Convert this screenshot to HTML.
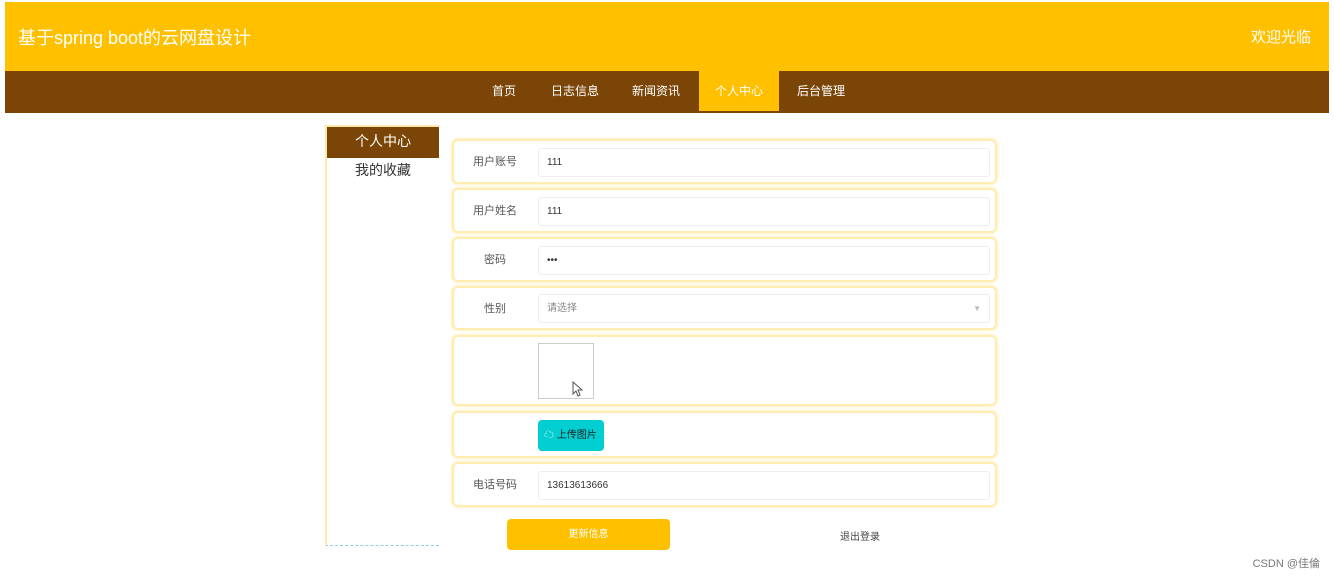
<!DOCTYPE html>
<html><head><meta charset="utf-8"><style>
*{margin:0;padding:0;box-sizing:border-box}
body{width:1334px;height:577px;background:#fff;position:relative;overflow:hidden;font-family:"Liberation Sans","Noto Sans CJK SC",sans-serif}
.hd{position:absolute;left:5px;top:2px;width:1324px;height:69px;background:#FFC000;color:#fff}
.hd .t{position:absolute;left:13px;top:22px;font-size:18px}
.hd .w{position:absolute;right:18px;top:24px;font-size:15px}
.nav{position:absolute;left:5px;top:71px;width:1324px;height:42px;background:#7A4507;color:#fff;font-size:12px}
.nav span{position:absolute;top:0;line-height:40px;text-align:center}
.nav .a{background:#FFC000}
.side{position:absolute;left:325px;top:125px;width:114px;height:421px;border-left:2px solid #FFE9A8;border-top:2px solid #FFE9A8;border-bottom:1px dashed #9cd}
.side .a{height:31px;background:#7A4507;color:#fff;text-align:center;line-height:29px;font-size:14px}
.side .b{text-align:center;font-size:14px;color:#333;margin-top:2px}
.row{position:absolute;left:452px;width:545px;border:2px solid #FFECB0;border-radius:6px;box-shadow:0 0 3px #FFE7A0;background:#fff}
.lb{position:absolute;left:0;width:82px;text-align:center;font-size:11px;color:#555}
.in{position:absolute;left:84px;width:452px;height:29px;border:1px solid #eee;border-radius:3px;font-size:10px;color:#333;padding-left:8px;line-height:27px}
</style></head><body>
<div class="hd"><div class="t">基于spring boot的云网盘设计</div><div class="w">欢迎光临</div></div>
<div class="nav">
<span style="left:474px;width:50px">首页</span>
<span style="left:540px;width:60px">日志信息</span>
<span style="left:621px;width:60px">新闻资讯</span>
<span class="a" style="left:694px;width:80px;line-height:40px">个人中心</span>
<span style="left:786px;width:60px">后台管理</span>
</div>
<div class="side"><div class="a">个人中心</div><div class="b">我的收藏</div></div>

<div class="row" style="top:139px;height:45px"><div class="lb" style="top:12px">用户账号</div><div class="in" style="top:7px">111</div></div>
<div class="row" style="top:188px;height:45px"><div class="lb" style="top:12px">用户姓名</div><div class="in" style="top:7px">111</div></div>
<div class="row" style="top:237px;height:45px"><div class="lb" style="top:12px">密码</div><div class="in" style="top:7px">•••</div></div>
<div class="row" style="top:286px;height:44px"><div class="lb" style="top:12px">性别</div><div class="in" style="top:6px;color:#888">请选择<span style="position:absolute;right:8px;color:#bbb;font-size:8px">▼</span></div></div>
<div class="row" style="top:335px;height:71px"><div style="position:absolute;left:84px;top:6px;width:56px;height:56px;border:1px solid #ccc"></div>
<svg style="position:absolute;left:118px;top:44px" width="12" height="16" viewBox="0 0 12 16"><path d="M1 1 L1 13 L4 10 L6 15 L8 14 L6 9 L10 9 Z" fill="#fff" stroke="#555" stroke-width="1"/></svg></div>
<div class="row" style="top:411px;height:47px"><div style="position:absolute;left:84px;top:7px;width:66px;height:31px;background:#00CED1;border-radius:4px;color:#222;font-size:10px;line-height:31px;padding-left:6px"><span style="color:#fff">☁</span> 上传图片</div></div>
<div class="row" style="top:462px;height:45px"><div class="lb" style="top:12px">电话号码</div><div class="in" style="top:7px">13613613666</div></div>

<div style="position:absolute;left:507px;top:519px;width:163px;height:31px;background:#FFC000;border-radius:4px;color:#fff;font-size:10px;text-align:center;line-height:31px">更新信息</div>
<div style="position:absolute;left:820px;top:528px;width:80px;text-align:center;font-size:10px;color:#444">退出登录</div>
<div style="position:absolute;right:14px;top:555px;font-size:11px;color:#777">CSDN @佳倫</div>
</body></html>
